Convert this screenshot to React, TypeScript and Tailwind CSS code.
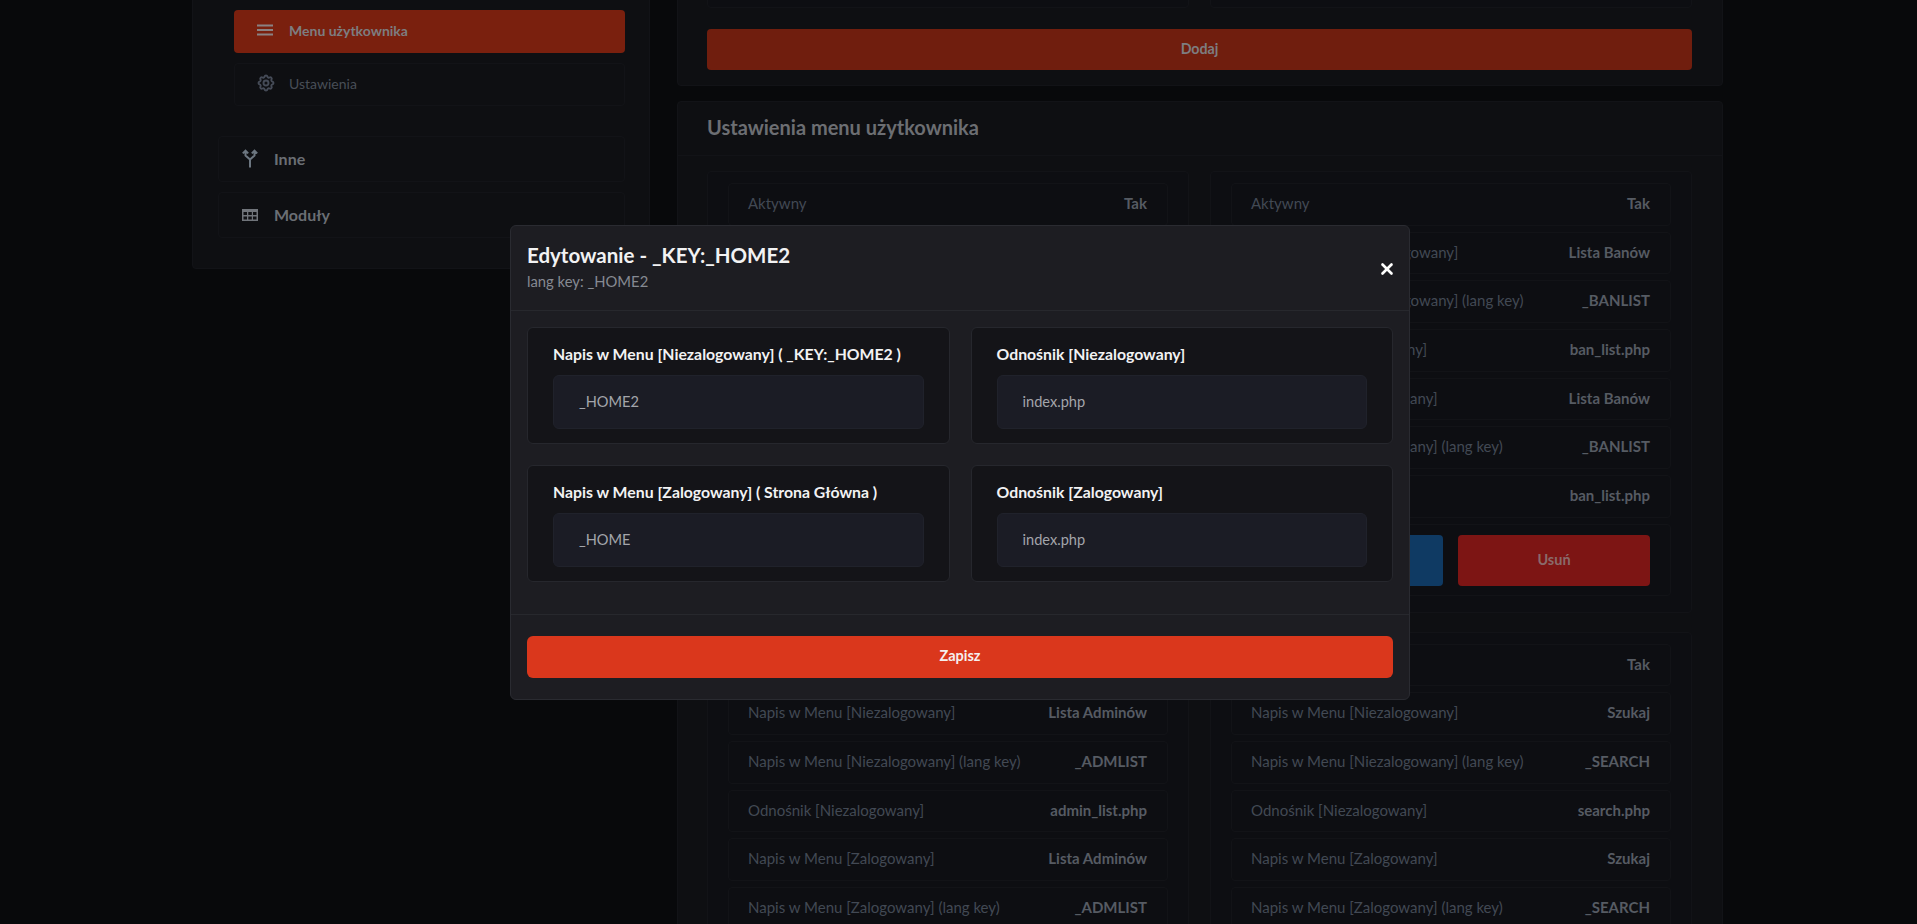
import { X } from "lucide-react";
import { TbSettings } from "react-icons/tb";

const font = { fontFamily: "Lato, 'Noto Sans', sans-serif" };

function Row({ l, v }: { l: string; v: string }) {
  return (
    <div className="flex h-[42.67px] items-center justify-between rounded border border-[#121317] bg-[#0d0e12] pr-[20px] pb-[2px] pl-[19px] text-[15px]">
      <span className="text-[#424954]">{l}</span>
      <span className="font-bold text-[#565b63]">{v}</span>
    </div>
  );
}

function Panel({ rows, buttons }: { rows: [string, string][]; buttons?: boolean }) {
  return (
    <div className="flex flex-col gap-[6px] rounded border border-[#121317] bg-[#0d0e12] px-5 pt-[11px] pb-4">
      {rows.map((r, i) => (
        <Row key={i} l={r[0]} v={r[1]} />
      ))}
      {buttons && (
        <div className="flex gap-[15px] rounded border border-[#121317] pt-[10px] pr-[20px] pb-[9px] pl-[19px]">
          <div className="flex h-[51px] flex-1 items-center justify-center rounded bg-[#0f3a63] text-[14.5px] font-bold text-[#5b6a78]">Edytuj</div>
          <div className="flex h-[51px] flex-1 items-center justify-center rounded bg-[#7d1514] text-[14.5px] font-bold text-[#8a6a6a]">Usuń</div>
        </div>
      )}
    </div>
  );
}

const menuRows = (a: string, key: string, link: string): [string, string][] => [
  ["Aktywny", "Tak"],
  ["Napis w Menu [Niezalogowany]", a],
  ["Napis w Menu [Niezalogowany] (lang key)", key],
  ["Odnośnik [Niezalogowany]", link],
  ["Napis w Menu [Zalogowany]", a],
  ["Napis w Menu [Zalogowany] (lang key)", key],
  ["Odnośnik [Zalogowany]", link],
];

function Field({ label, value }: { label: string; value: string }) {
  return (
    <div className="rounded-md border border-[#26272d] bg-[#141418] px-[25px] pt-[16px] pb-[14px]">
      <div className="text-[15.8px] font-bold leading-5 text-[#f2f2f3]">{label}</div>
      <div className="mt-[11px] flex h-[54px] items-center rounded-md border border-[#20222b] bg-[#1b1c25] px-[25px] text-[14.6px] text-[#a3a5ab]">{value}</div>
    </div>
  );
}

export default function App() {
  return (
    <div style={font} className="relative h-[924px] overflow-hidden bg-[#08090b]">
      <div className="ml-[192px] flex w-[1531px] items-start gap-[27px]">
        <aside className="-mt-[20px] w-[458px] rounded border border-[#121317] bg-[#0e0f12] pt-[29px] pr-[24px] pb-[30px] pl-[25px]">
          <div className="ml-[16px] flex flex-col gap-[10px]">
            <div className="flex h-[43px] items-center rounded-sm bg-[#7a200e] pb-[3px] pl-[23px] text-[14px] font-bold text-[#7d7d80]">
              <span className="w-[32px]">
                <svg width="16" height="12" viewBox="0 0 16 12" fill="#8a8283">
                  <rect x="0" y="0.5" width="16" height="2" />
                  <rect x="0" y="5" width="16" height="2" />
                  <rect x="0" y="9.5" width="16" height="2" />
                </svg>
              </span>
              Menu użytkownika
            </div>
            <div className="flex h-[43px] items-center rounded-sm border border-[#121317] pb-[3px] pl-[22px] text-[14px] text-[#484e57]">
              <span className="-ml-[1px] w-[33px]">
                <TbSettings size={20} strokeWidth={2.3} className="text-[#454b57]" />
              </span>
              Ustawienia
            </div>
          </div>
          <div className="mt-[30px] flex flex-col gap-[10px]">
            {["Inne", "Moduły"].map((t, i) => (
              <div key={t} className="flex h-[46px] items-center rounded-sm border border-[#121317] pb-[1px] pl-[23px] text-[16px] font-bold text-[#6a6e74]">
                <span className="w-[32px]">
                  {i === 0 ? (
                    <svg width="16" height="19" viewBox="0 0 16 19" fill="none" stroke="#6c7680" strokeWidth="2">
                      <path d="M8 18.5V10.5L3.5 6.5V1.5M8 10.5l4.5-4V1.5M0.8 4.4L3.5 1.6 6.2 4.4M9.8 4.4L12.5 1.6 15.2 4.4" />
                    </svg>
                  ) : (
                    <svg width="16" height="12" viewBox="0 0 16 12">
                      <rect width="16" height="12" fill="#70747a" />
                      <g fill="#101114">
                        <rect x="1.5" y="3" width="3.5" height="3" />
                        <rect x="6.3" y="3" width="3.5" height="3" />
                        <rect x="11" y="3" width="3.5" height="3" />
                        <rect x="1.5" y="7.5" width="3.5" height="3" />
                        <rect x="6.3" y="7.5" width="3.5" height="3" />
                        <rect x="11" y="7.5" width="3.5" height="3" />
                      </g>
                    </svg>
                  )}
                </span>
                {t}
              </div>
            ))}
          </div>
        </aside>
        <main className="flex w-[1046px] flex-col gap-[15px]">
          <section className="-mt-[20px] rounded border border-[#121317] bg-[#0e0f12] pr-[30px] pb-[15px] pl-[29px]">
            <div className="grid grid-cols-2 gap-[21px]">
              <div className="h-[27px] rounded border border-[#121317] bg-[#0d0e12]" />
              <div className="h-[27px] rounded border border-[#121317] bg-[#0d0e12]" />
            </div>
            <div className="mt-[21px] flex h-[41px] items-center justify-center rounded bg-[#701e0e] pb-[2px] text-[14.2px] font-bold text-[#7d7d80]">Dodaj</div>
          </section>
          <section className="rounded border border-[#121317] bg-[#0e0f12]">
            <div className="flex h-[54px] items-center border-b border-[#121317] pr-[30px] pb-[3px] pl-[29px] text-[20px] font-bold text-[#6c6e72]">Ustawienia menu użytkownika</div>
            <div className="grid grid-cols-2 gap-x-[21px] gap-y-[19px] pt-[15px] pr-[30px] pl-[29px]">
              <Panel rows={menuRows("Strona Główna", "_HOME", "index.php")} buttons />
              <Panel rows={menuRows("Lista Banów", "_BANLIST", "ban_list.php")} buttons />
              <Panel rows={menuRows("Lista Adminów", "_ADMLIST", "admin_list.php")} />
              <Panel rows={menuRows("Szukaj", "_SEARCH", "search.php")} />
            </div>
          </section>
        </main>
      </div>

      <div className="absolute inset-0 flex items-center justify-center pt-[1px] pl-[3px]">
        <div className="w-[900px] overflow-hidden rounded-md border border-[#2a2b31] bg-[#1d1d22]">
          <div className="relative h-[85px] border-b border-[#27282d] pt-[15px] pr-[13px] pl-[16px]">
            <div className="text-[20.5px] font-bold leading-[28px] text-[#f2f2f3]">Edytowanie - _KEY:_HOME2</div>
            <div className="mt-[2px] text-[14.8px] leading-[20px] text-[#868a92]">lang key: _HOME2</div>
            <X size={18} strokeWidth={3.5} className="absolute top-[34px] right-[13px] text-white" />
          </div>
          <div className="grid grid-cols-2 gap-x-[21px] gap-y-[21px] border-b border-[#27282d] px-[16px] pt-[16px] pb-[32px]">
            <Field label="Napis w Menu [Niezalogowany] ( _KEY:_HOME2 )" value="_HOME2" />
            <Field label="Odnośnik [Niezalogowany]" value="index.php" />
            <Field label="Napis w Menu [Zalogowany] ( Strona Główna )" value="_HOME" />
            <Field label="Odnośnik [Zalogowany]" value="index.php" />
          </div>
          <div className="px-[16px] pt-[21px] pb-[21px]">
            <div className="flex h-[42px] items-center justify-center rounded-md bg-[#da371c] pb-[2px] text-[14.5px] font-bold text-[#f5efee]">Zapisz</div>
          </div>
        </div>
      </div>
    </div>
  );
}
